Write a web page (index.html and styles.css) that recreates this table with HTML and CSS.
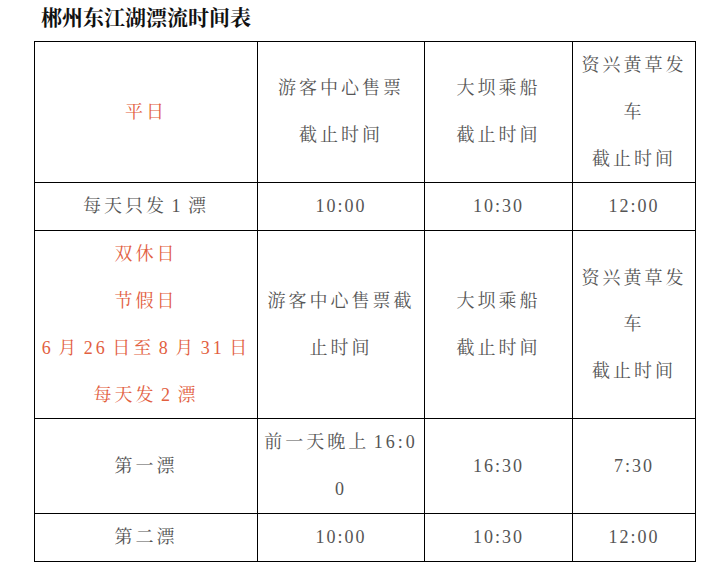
FILE: index.html
```html
<!DOCTYPE html>
<html lang="zh-CN">
<head>
<meta charset="utf-8">
<title>郴州东江湖漂流时间表</title>
<link rel="stylesheet" href="styles.css">
</head>
<body>
<h1 class="title">郴州东江湖漂流时间表</h1>
<table class="schedule">
  <colgroup>
    <col class="c1"><col class="c2"><col class="c3"><col class="c4">
  </colgroup>
  <tr>
    <td class="red">平日</td>
    <td>游客中心售票<br>截止时间</td>
    <td>大坝乘船<br>截止时间</td>
    <td>资兴黄草发<br>车<br>截止时间</td>
  </tr>
  <tr>
    <td>每天只发 1 漂</td>
    <td class="num">10:00</td>
    <td class="num">10:30</td>
    <td class="num">12:00</td>
  </tr>
  <tr>
    <td class="red">双休日<br>节假日<br>6 月 26 日至 8 月 31 日<br>每天发 2 漂</td>
    <td>游客中心售票截<br>止时间</td>
    <td>大坝乘船<br>截止时间</td>
    <td>资兴黄草发<br>车<br>截止时间</td>
  </tr>
  <tr>
    <td>第一漂</td>
    <td>前一天晚上 16:0<br>0</td>
    <td class="num">16:30</td>
    <td class="num">7:30</td>
  </tr>
  <tr>
    <td>第二漂</td>
    <td class="num">10:00</td>
    <td class="num">10:30</td>
    <td class="num">12:00</td>
  </tr>
</table>
</body>
</html>
```

FILE: styles.css
```css
html, body {
  margin: 0;
  padding: 0;
  background: #ffffff;
}

body {
  font-family: "Liberation Serif", "Noto Serif CJK SC", "Noto Sans CJK SC", serif;
}

.title {
  margin: 0 0 0 41px;
  padding: 0 0 5px 0;
  font-size: 21px;
  line-height: 36px;
  font-weight: bold;
  color: #111111;
}

.schedule {
  margin-left: 34px;
  border-collapse: collapse;
  table-layout: fixed;
  width: 661px;
}

.c1 { width: 223px; }
.c2 { width: 167px; }
.c3 { width: 148px; }
.c4 { width: 123px; }

.schedule td {
  border: 1px solid #000000;
  padding: 0 4px;
  text-align: center;
  vertical-align: middle;
  white-space: nowrap;
  font-size: 18px;
  line-height: 46.8px;
  letter-spacing: 3px;
  word-spacing: -3px;
  color: #555555;
}

.schedule td.num {
  letter-spacing: 2px;
}

.schedule td.red {
  color: #e2603f;
}
```
